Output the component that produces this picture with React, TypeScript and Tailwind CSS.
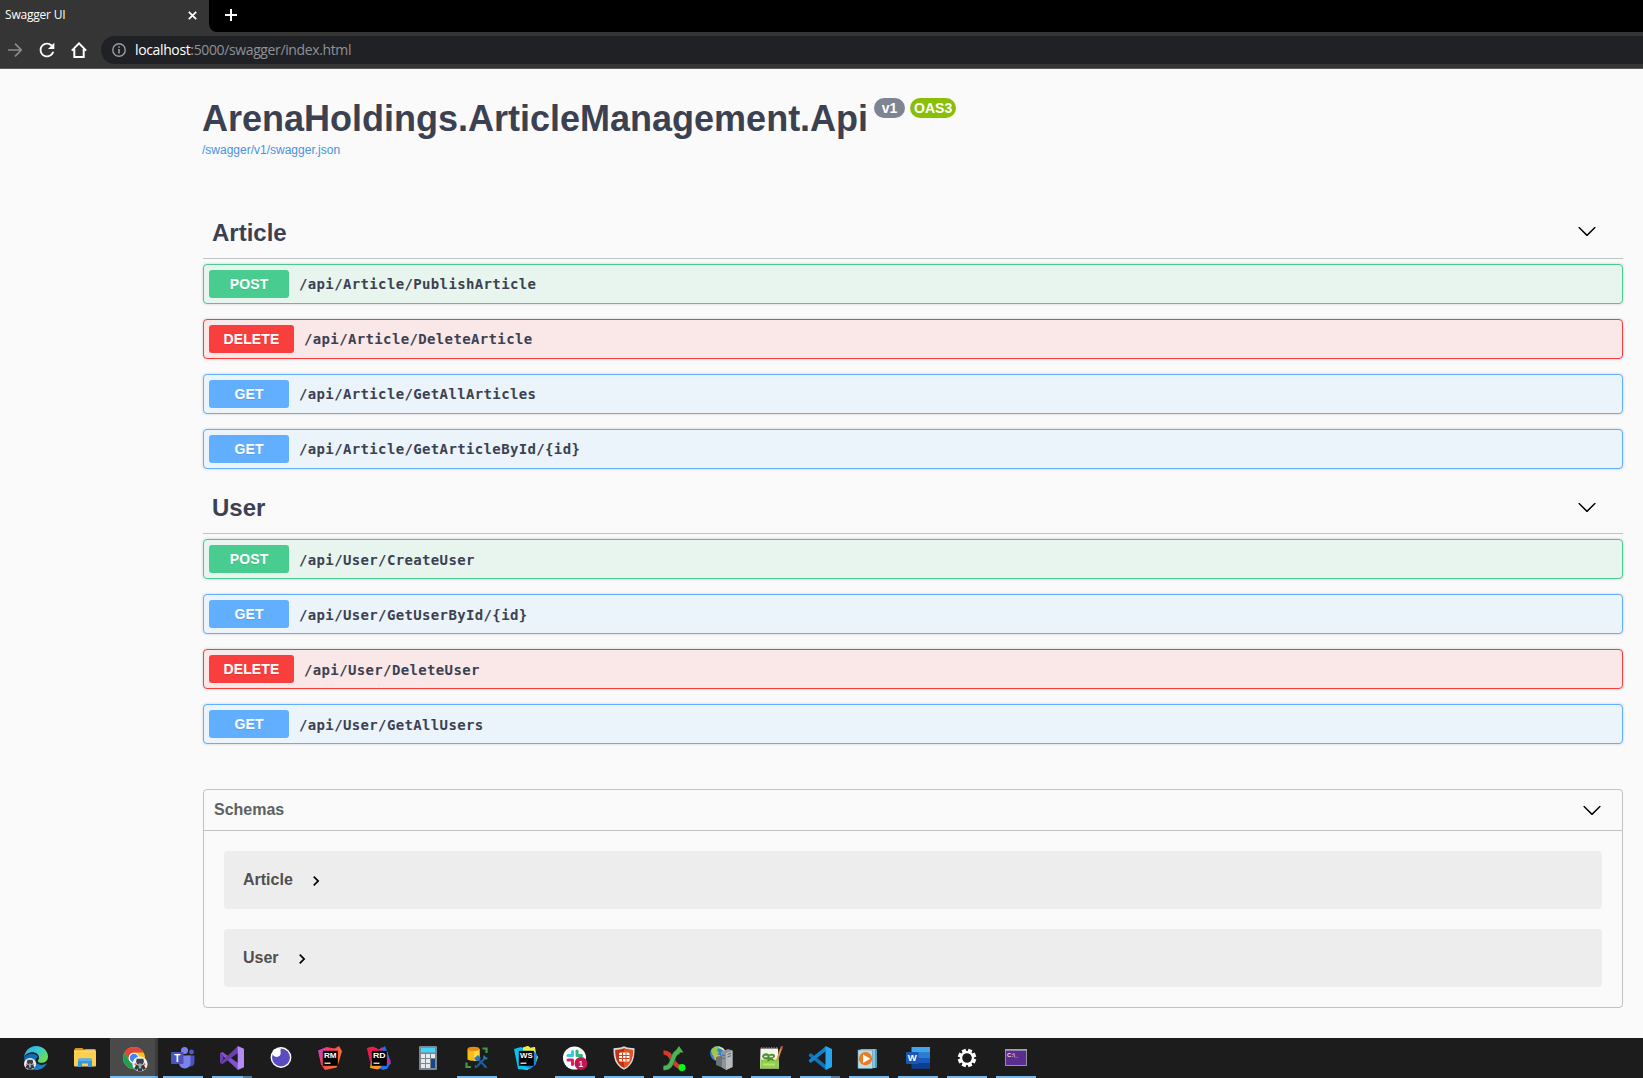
import React from "react";

type Method = "POST" | "DELETE" | "GET";

const methodStyles: Record<Method, { row: string; badge: string }> = {
  POST: { row: "border-[#49cc90] bg-[#e8f5ee]", badge: "w-[80px] bg-[#49cc90]" },
  DELETE: { row: "border-[#f93e3e] bg-[#fae7e7]", badge: "w-[85px] bg-[#f93e3e]" },
  GET: { row: "border-[#61affe] bg-[#ebf3fb]", badge: "w-[80px] bg-[#61affe]" },
};

const articleOps: [Method, string][] = [
  ["POST", "/api/Article/PublishArticle"],
  ["DELETE", "/api/Article/DeleteArticle"],
  ["GET", "/api/Article/GetAllArticles"],
  ["GET", "/api/Article/GetArticleById/{id}"],
];

const userOps: [Method, string][] = [
  ["POST", "/api/User/CreateUser"],
  ["GET", "/api/User/GetUserById/{id}"],
  ["DELETE", "/api/User/DeleteUser"],
  ["GET", "/api/User/GetAllUsers"],
];

function ChevronDown() {
  return (
    <svg width="20" height="20" viewBox="0 0 20 20" className="shrink-0 fill-black">
      <path d="M17.418 6.109c.272-.268.709-.268.979 0s.271.701 0 .969l-7.908 7.83c-.27.268-.707.268-.979 0l-7.908-7.83c-.27-.268-.27-.701 0-.969.271-.268.709-.268.979 0L10 13.25l7.418-7.141z" />
    </svg>
  );
}

function Operation({ method, path, pathClass }: { method: Method; path: string; pathClass: string }) {
  const s = methodStyles[method];
  return (
    <div className={`flex h-10 items-center rounded border px-[5px] shadow-[0_0_3px_rgba(0,0,0,0.19)] ${s.row}`}>
      <div
        className={`flex h-7 shrink-0 items-center justify-center rounded-[3px] text-sm leading-4 font-bold tracking-[0.15px] text-white [text-shadow:0_1px_0_rgba(0,0,0,0.1)] ${s.badge}`}
      >
        {method}
      </div>
      <div className={`px-[10px] font-['DejaVu_Sans_Mono','Liberation_Mono',monospace] text-[14px] leading-5 font-bold tracking-[0.36px] text-[#3b4151] ${pathClass}`}>
        {path}
      </div>
    </div>
  );
}

function Tag({
  name,
  ops,
  pathClass,
  chevronClass,
}: {
  name: string;
  ops: [Method, string][];
  pathClass: string;
  chevronClass: string;
}) {
  return (
    <section>
      <div className="mb-[5px] flex h-[50px] items-center justify-between border-b border-[#3b4151]/30 pr-[26px] pl-[9px]">
        <h2 className="pb-[2px] text-2xl leading-7 font-bold text-[#3b4151]">{name}</h2>
        <div className={chevronClass}>
          <ChevronDown />
        </div>
      </div>
      <div className="flex flex-col gap-[15px]">
        {ops.map(([m, p]) => (
          <Operation key={p} method={m} path={p} pathClass={pathClass} />
        ))}
      </div>
    </section>
  );
}

function Model({ name }: { name: string }) {
  return (
    <div className="flex h-[58px] items-center rounded bg-[#ededed] pl-[19px]">
      <span className="text-base leading-5 font-bold text-[#505050]">{name}</span>
      <svg width="20" height="20" viewBox="0 0 24 24" className="mt-[2px] ml-[13px]">
        <path d="M10 6L8.59 7.41 13.17 12l-4.58 4.59L10 18l6-6z" />
      </svg>
    </div>
  );
}

/* ---------- Taskbar icons, 24 x 24 ---------- */

function ProfileBadge({ cx, cy, r }: { cx: number; cy: number; r: number }) {
  return (
    <g transform={`translate(${cx} ${cy}) scale(${r / 6})`}>
      <circle r="6" fill="#eef0f1" />
      <path d="M-2.6-4.2h5.2l.5 2.4-1 2.2h-4.200l-1-2.200z" fill="#39434b" />
      <path d="M-4.600 3.600l1.700-3 2.900 1 2.900-1 1.700 3-1.800 1.400-.8-1.600-.3 2.300h-3.400l-.3-2.300-.8 1.600z" fill="#2c3940" />
      <path d="M-1-.4h2v4h-2z" fill="#9aa5aa" />
      <circle cx="-3.500" cy=".3" r=".8" fill="#e2574b" />
      <circle cx="3.500" cy=".3" r=".8" fill="#e2574b" />
    </g>
  );
}

const EdgeIcon = () => (
  <>
    <defs>
      <linearGradient id="edgeTop" x1="0" y1="0" x2="1" y2="0.6">
        <stop offset="0" stopColor="#2fa8e8" />
        <stop offset="0.5" stopColor="#35c6d8" />
        <stop offset="1" stopColor="#6ade56" />
      </linearGradient>
      <linearGradient id="edgeLow" x1="0" y1="0" x2="1" y2="1">
        <stop offset="0" stopColor="#0d5fae" />
        <stop offset="1" stopColor="#1b8ad8" />
      </linearGradient>
    </defs>
    <path d="M0 11.500C3 7 12 6 14 11c-3 1-3.500 6 1 7.500 3 1 6 0 8-1.500C20.500 22 16 24 12 24 5 24 0 18.500 0 11.500z" fill="url(#edgeLow)" />
    <path d="M0 11.500C.8 5 5.500 0 12 0c7.500 0 12 5.300 12 10.500 0 4.300-3.200 6.300-6.300 6.300-2.800 0-4-1-4-1.800 0-.6 1.300-1.200 1.300-3.300C15 8.500 12 6.300 8.500 6.300 4.500 6.300 1.200 8.500 0 11.500z" fill="url(#edgeTop)" />
    <ProfileBadge cx={6} cy={18} r={6} />
  </>
);

const ExplorerIcon = () => (
  <>
    <path d="M1 4.500Q1 3 2.500 2h7l2 2.500H22.500v4H1z" fill="#d9960f" />
    <rect x="1" y="4.500" width="22" height="16" rx="1" fill="#fccf4f" />
    <path d="M1 4.500h9l2-1.400h10.500v3H1z" fill="#ffe08a" opacity=".7" />
    <path d="M5 21v-7q0-1.500 1.500-1.500h11Q19 12.500 19 14v7h-4v-3.500H9V21z" fill="#3a97df" />
    <path d="M5 15h14v-1q0-1.500-1.500-1.500h-11Q5 12.500 5 14z" fill="#55b2f1" />
  </>
);

const ChromeIcon = () => (
  <>
    <circle cx="12" cy="12" r="11" fill="#fbc116" />
    <path d="M2.500 6.500A11 11 0 0 1 21.600 6.600H12A5.500 5.500 0 0 0 7.200 14.700z" fill="#e0473a" />
    <path d="M2.500 6.500l4.700 8.200A5.500 5.500 0 0 0 14 17.200L11.500 23A11 11 0 0 1 2.500 6.500z" fill="#1f9e55" />
    <circle cx="12" cy="12" r="5.300" fill="#fff" />
    <circle cx="12" cy="12" r="4.200" fill="#4286f4" />
    <ProfileBadge cx={18} cy={18} r={7.600} />
  </>
);

const TeamsIcon = () => (
  <>
    <circle cx="20.500" cy="6" r="2.400" fill="#5059c9" />
    <path d="M16 9.500h7.500v6.500c0 3-2 4.500-4.500 4.500h-3z" fill="#4a52bd" />
    <circle cx="13.500" cy="4.500" r="3.500" fill="#7b83eb" />
    <path d="M8 9.500h11.500v7.500c0 3-2.400 5.400-5.700 5.400S8 20 8 17z" fill="#7b83eb" />
    <rect x="0" y="6" width="12.500" height="12" rx="1" fill="#4b53bc" />
    <text x="6.300" y="15.600" textAnchor="middle" fontSize="10" fontWeight="700" fill="#fff">T</text>
  </>
);

const VisualStudioIcon = () => (
  <>
    <path d="M0 7.200l2.500-1.200 15.500 11V24z" fill="#8152c9" />
    <path d="M0 16.900l2.500 1.100L18 7V0z" fill="#6a3fae" />
    <path d="M0 7.200v9.700l3.300-3.100v-3.700z" fill="#6c40b3" />
    <path d="M17.700 0L24 2.700v18.500L17.700 24z" fill="#b58af2" />
  </>
);

const InsomniaIcon = () => (
  <>
    <circle cx="12" cy="11.500" r="10.400" fill="#fff" />
    <circle cx="12" cy="11.500" r="9" fill="#5a4cc0" />
    <path d="M3 8A9.300 9.300 0 0 1 11.800 2.500 6 6 0 0 1 3 8z" fill="#fff" />
    <circle cx="7.600" cy="6.800" r="4.100" fill="#fff" />
  </>
);

function JetBrains({ id, label, shape, stops }: { id: string; label: string; shape: string; stops: string[] }) {
  return (
    <>
      <defs>
        <linearGradient id={id} x1="0" y1="0.2" x2="1" y2="0.8">
          {stops.map((c, i) => (
            <stop key={i} offset={i / (stops.length - 1)} stopColor={c} />
          ))}
        </linearGradient>
      </defs>
      <path d={shape} fill={`url(#${id})`} />
      <rect x="4.800" y="4.800" width="15" height="15" fill="#000" />
      <text x="6" y="11.600" fontSize="8" fontWeight="700" fill="#fff" textLength="12.600" lengthAdjust="spacingAndGlyphs">
        {label}
      </text>
      <rect x="6.500" y="16.600" width="6" height="1.200" fill="#fff" />
    </>
  );
}

const RubyMineIcon = () => (
  <JetBrains id="rmGrad" label="RM" stops={["#c043d8", "#fd3a5b", "#f9603a", "#fd8a2b"]} shape="M0 4.500L8.500 1l8 1.500L21 0l3 5-3.500 12-2 4.500L7 24 3 18.500z" />
);
const RiderIcon = () => (
  <>
    <path d="M13 4l5-4 3 8 3 8-7 8-7-2z" fill="#1e72f0" />
    <path d="M0 2l5.500-1L12 3.500 15 1l5 8 4 9-4 1-8 4-7-1z" fill="#e32173" />
    <path d="M0 2l6-1.500L15 5l3 3H4l-1 8z" fill="#e91b50" />
    <path d="M4 15l-1 7 8 1.500 7-6z" fill="#fd9a20" />
    <path d="M13 23l2-5h8l-3 5z" fill="#1e72f0" />
    <path d="M14 4.500L16.500 1l4.500 5.500v4z" fill="#1e72f0" />
    <JetBrains id="rdGrad" label="RD" stops={["#e91b50", "#e91b50"]} shape="M5 5h10v10H5z" />
  </>
);
const WebStormIcon = () => (
  <>
    <path d="M8 2l6-2 3 2 4-1 1 7 2 3-3 8-8 5-7-2z" fill="#e9ef4a" />
    <path d="M0 3l7-2 5 3 6-1.500L22 8l-3 12-7 4-8-1z" fill="#07c3f2" />
    <path d="M13 3l5 0 5 6-1 9-6 5-5-3z" fill="#1d83e3" />
    <path d="M9 1.500L14 0l2 2 4.500-1 .5 4H9z" fill="#e9ef4a" />
    <JetBrains id="wsGrad" label="WS" stops={["#07c3f2", "#087cfa"]} shape="M5 5h10v10H5z" />
  </>
);

const CalculatorIcon = () => (
  <>
    <rect x="3" y="0" width="18" height="24" rx="1" fill="#7d8791" />
    <rect x="5" y="1.800" width="14" height="4.600" fill="#3fd6fb" />
    {[8, 13, 18].map((y) =>
      [5, 10, 15].map((x) => <rect key={`${x}-${y}`} x={x} y={y} width="4" height="4" fill="#e6eaed" />),
    )}
    <rect x="15" y="13" width="4" height="9" fill="#17458b" />
  </>
);

const DatabaseToolIcon = () => (
  <>
    <path d="M2.500 3v10c0 2.400 12 2.400 12 0V3z" fill="#f7bd17" />
    <path d="M9 4v11c3 0 5.500-.8 5.500-2V3z" fill="#ffd83d" />
    <ellipse cx="8.500" cy="2.900" rx="6" ry="2.200" fill="#e88a18" />
    <path d="M17.500 2.500h4V7M1.500 16.500V21H6" fill="none" stroke="#3f9a45" strokeWidth="2.200" />
    <path d="M12 12l8.500 8.500M20.500 11.500L12 20.500" stroke="#1d5c9a" strokeWidth="2.200" />
    <path d="M10 12.500l3-2.500 2 2-3 2.500zM19 9.500v3h3.500M19 20.500l3 1M10 19.500l1.500 2.500" stroke="#2f78b5" strokeWidth="1.300" fill="#2f78b5" />
  </>
);

const SlackIcon = () => (
  <>
    <circle cx="11.500" cy="12" r="11.500" fill="#fff" />
    <g strokeWidth="3" strokeLinecap="round">
      <path d="M9.500 5.500v4M5 9.500h4.500" stroke="#36c5f0" />
      <path d="M14 5v4.500M14 9.500h4.500" stroke="#2eb67d" />
      <path d="M5 14h4.500M9.500 14v4.500" stroke="#e01e5a" />
      <path d="M14 14h4" stroke="#ecb22e" />
    </g>
    <circle cx="18" cy="17.500" r="6.500" fill="#c4164f" />
    <text x="18" y="20.800" textAnchor="middle" fontSize="9.500" fill="#fff">1</text>
  </>
);

const ShieldIcon = () => (
  <>
    <path d="M12 .3C8.500 2 5 2.200 1.500 2.200 1.300 12 3 19 12 23.700 21 19 22.700 12 22.500 2.200 19 2.200 15.500 2 12 .3z" fill="#d9d9d9" />
    <path d="M12 2.300C9 3.600 6 3.900 3.200 3.900 3.200 12.300 4.800 18 12 22c7.200-4 8.800-9.700 8.800-18.100C18 3.900 15 3.600 12 2.300z" fill="#c62f12" />
    <path d="M12 2.300V22c7.200-4 8.800-9.700 8.800-18.100C18 3.900 15 3.600 12 2.300z" fill="#e4531d" />
    <rect x="7" y="6.500" width="10.500" height="9" rx="1.500" fill="#fff" />
    <path d="M7 9.500h10.500M7 12.500h10.500M10.500 6.500v9M14 6.500v9" stroke="#d8401c" strokeWidth="1" />
  </>
);

const CrossArrowsIcon = () => (
  <>
    <path d="M2.500 6.500c5.500 0 7 4 9 7.500s3.500 6 7 6.500" fill="none" stroke="#d8382d" strokeWidth="4.500" />
    <path d="M2.500 22c9 0 8-8 11-13 1-1.800 2.500-3 5-3.500" fill="none" stroke="#1f7a34" strokeWidth="5.200" />
    <path d="M2.500 22c9 0 8-8 11-13 1-1.800 2.500-3 4.500-3.500" fill="none" stroke="#4eb257" strokeWidth="4" />
    <path d="M18 0l4.500 6.500h-9z" fill="#4eb257" />
    <circle cx="21" cy="21.500" r="3.600" fill="#00ff1e" />
  </>
);

const ServerGlobeIcon = () => (
  <>
    <circle cx="7.500" cy="7.500" r="7.400" fill="#2a86dc" />
    <path d="M1 4c3-4 6-4 9-3.500L7 4l2 3-4 4-3-3z" fill="#9bc646" />
    <path d="M3 8l7 1-2 5H5z" fill="#d9b93d" />
    <path d="M9 1.500c4 .5 6 3 6 7" fill="none" stroke="#f6e087" strokeWidth="1.500" />
    <path d="M11 6l7-3 4.500 1.500V21L16 24l-5-3z" fill="#8e9498" />
    <path d="M16 7l6.500-2.500V21L16 24z" fill="#b4babd" />
    <path d="M6 11l6-1.500V20l-1 1-5-2z" fill="#6a7379" />
    <path d="M17.500 8.500l3.500-1.300M17.500 11l3.500-1.300M12 9l3 .800M12 12l3 .800" stroke="#616a70" />
  </>
);

const NotepadIcon = () => (
  <>
    <path d="M1.500 2.500h17.500l1 20H1z" fill="#f4f5ee" />
    <path d="M2 2h16.500" stroke="#8b8b8b" strokeWidth="1.600" strokeDasharray="1.300 1.200" />
    <path d="M1.800 13.500h17.700l.5 9H1.200z" fill="#8fce48" />
    <path d="M3 10c2-3.500 5-3 7-1.500 3-1.500 6-.5 6 1.500 0 1.500-1.500 2.200-2.500 2.200l2 2.800-4-1-3 1.800v-2.300C5 13.500 3 12 3 10z" fill="#4c8f2c" />
    <path d="M5 10.500h3.500M10.500 10.500h3.500" stroke="#d8eec0" strokeWidth="1.600" />
    <path d="M4 18.500h12" stroke="#b9e27f" strokeWidth="2" />
    <path d="M22.500 1.500L18 14.500" stroke="#dd9635" strokeWidth="2" />
    <path d="M23.200.2l-1 2.600" stroke="#b7474d" strokeWidth="2.200" />
  </>
);

const VsCodeIcon = () => (
  <>
    <path d="M.8 8.800L2.700 7l15.500 12.300V24L.8 9.900z" fill="#0f74ba" />
    <path d="M.8 15.200L2.700 17 18.200 4.700V0L.8 14.100z" fill="#1184cd" />
    <path d="M17.500 0L24 3v18l-6.500 3z" fill="#27a5ee" />
  </>
);

const MediaPlayerIcon = () => (
  <>
    <rect x="5" y="3" width="15" height="19" rx="1" fill="#4d9bb8" />
    <rect x="3.500" y="3" width="14.500" height="19" fill="#8ac4da" />
    <rect x="1" y="4" width="14.500" height="18.500" fill="#b8dcea" stroke="#5f97af" strokeWidth=".6" />
    <circle cx="8.500" cy="12.700" r="6.600" fill="#ee7a1c" />
    <path d="M6 8.500l7.300 4.200L6 17z" fill="#fff" />
  </>
);

const WordIcon = () => (
  <>
    <rect x="5.500" y="1" width="18.500" height="5.800" fill="#41a5ee" />
    <rect x="5.500" y="6.600" width="18.500" height="5.600" fill="#2b7cd3" />
    <rect x="5.500" y="12" width="18.500" height="5.500" fill="#185abd" />
    <rect x="5.500" y="17.300" width="18.500" height="5.500" fill="#103f91" />
    <rect x="0" y="6" width="12.500" height="12" rx="1" fill="#1a56b6" />
    <text x="6.200" y="15.300" textAnchor="middle" fontSize="9.500" fontWeight="700" fill="#fff">W</text>
  </>
);

const SettingsIcon = () => (
  <g fill="#fff">
    {[22.5, 67.5, 112.5, 157.5, 202.5, 247.5, 292.5, 337.5].map((a) => (
      <rect key={a} x="9.900" y="2.800" width="4.200" height="4" transform={`rotate(${a} 12 12)`} />
    ))}
    <circle cx="12" cy="12" r="5.900" fill="none" stroke="#fff" strokeWidth="2.200" />
  </g>
);

const TerminalIcon = () => (
  <>
    <rect x="1.500" y="3.500" width="21" height="16" fill="#5b2d91" stroke="#8d949c" />
    <path d="M1 4h22" stroke="#a8adb3" strokeWidth="1.400" />
    <text x="3" y="10.500" fontSize="5.500" fontWeight="700" fill="#e4daf0" textLength="11" lengthAdjust="spacingAndGlyphs">C:\_</text>
  </>
);

type Task = { name: string; icon: React.ReactNode; state?: "running" | "stacked" | "active" };

const tasks: Task[] = [
  { name: "Edge", icon: <EdgeIcon /> },
  { name: "Explorer", icon: <ExplorerIcon /> },
  { name: "Chrome", icon: <ChromeIcon />, state: "active" },
  { name: "Teams", icon: <TeamsIcon />, state: "running" },
  { name: "Visual Studio", icon: <VisualStudioIcon />, state: "stacked" },
  { name: "Insomnia", icon: <InsomniaIcon /> },
  { name: "RubyMine", icon: <RubyMineIcon /> },
  { name: "Rider", icon: <RiderIcon /> },
  { name: "Calculator", icon: <CalculatorIcon /> },
  { name: "Database", icon: <DatabaseToolIcon />, state: "running" },
  { name: "WebStorm", icon: <WebStormIcon /> },
  { name: "Slack", icon: <SlackIcon />, state: "running" },
  { name: "Shield", icon: <ShieldIcon />, state: "running" },
  { name: "Cross", icon: <CrossArrowsIcon />, state: "running" },
  { name: "Server", icon: <ServerGlobeIcon />, state: "running" },
  { name: "Notepad", icon: <NotepadIcon />, state: "running" },
  { name: "Code", icon: <VsCodeIcon />, state: "stacked" },
  { name: "Media", icon: <MediaPlayerIcon />, state: "running" },
  { name: "Word", icon: <WordIcon />, state: "running" },
  { name: "Settings", icon: <SettingsIcon />, state: "running" },
  { name: "Terminal", icon: <TerminalIcon />, state: "running" },
];

function Taskbar() {
  return (
    <footer className="flex h-10 shrink-0 gap-px bg-[#1c1c1c] pl-3">
      {tasks.map((t) => (
        <div
          key={t.name}
          className={`flex w-12 flex-col items-center ${t.state === "active" ? "bg-[#4a4a4a] shadow-[inset_-3px_0_0_#3c3c3c]" : ""}`}
        >
          <div className="flex h-[38px] w-12 items-center justify-center pt-[2px]">
            <svg width="24" height="24" viewBox="0 0 24 24" className="overflow-visible font-['Liberation_Sans',sans-serif]">
              {t.icon}
            </svg>
          </div>
          {t.state === "active" && <div className="h-[2px] w-12 border-r-[3px] border-[#69a5d3] bg-[#76b9ed]" />}
          {t.state === "running" && <div className="h-[2px] w-10 bg-[#76b9ed]" />}
          {t.state === "stacked" && <div className="h-[2px] w-10 border-r-[9px] border-[#527da0] bg-[#76b9ed]" />}
        </div>
      ))}
    </footer>
  );
}

function BrowserBar() {
  return (
    <header className="h-[69px] shrink-0 border-b border-[#5b5b5b] bg-[#353535] font-['Open_Sans',sans-serif]">
      <div className="flex h-8">
        <div className="flex w-[209px] items-center pl-[5px]">
          <span className="flex-1 pb-[2px] text-xs leading-4 tracking-[-0.2px] text-white">Swagger UI</span>
          <svg width="9" height="9" viewBox="0 0 9 9" className="mr-[12px] mb-[2px]">
            <path d="M.8.8l7.400 7.400M8.200.8L.8 8.200" stroke="#fff" strokeWidth="1.700" />
          </svg>
        </div>
        <div className="flex flex-1 items-center rounded-bl-lg bg-black pl-4">
          <svg width="12" height="12" viewBox="0 0 12 12" className="mb-[2px]">
            <path d="M6 0v12M0 6h12" stroke="#fff" strokeWidth="2" />
          </svg>
        </div>
      </div>
      <div className="flex h-9 items-center">
        <svg width="14" height="14" viewBox="0 0 14 14" className="ml-2" fill="none" stroke="#8b8b8b" strokeWidth="1.700">
          <path d="M0 7h13M7 .7L13.200 7 7 13.300" />
        </svg>
        <svg width="22" height="22" viewBox="0 0 24 24" className="ml-[14px]" fill="#fff">
          <path d="M17.650 6.350A7.958 7.958 0 0 0 12 4c-4.420 0-7.990 3.580-7.990 8s3.570 8 7.990 8c3.730 0 6.840-2.550 7.730-6h-2.080A5.990 5.990 0 0 1 12 18c-3.310 0-6-2.690-6-6s2.690-6 6-6c1.660 0 3.140.690 4.220 1.780L13 11h7V4l-2.350 2.350z" />
        </svg>
        <svg width="16" height="16" viewBox="0 0 16 16" className="ml-[13px]" fill="none" stroke="#fff" strokeWidth="2">
          <path d="M.8 8.600L8 1.400l7.200 7.200M3.300 7v8h9.400V7" />
        </svg>
        <div className="ml-[14px] flex h-7 flex-1 items-center rounded-l-full bg-[#202124] pl-[11px]">
          <svg width="14" height="14" viewBox="0 0 14 14" fill="none" stroke="#9a9da1" strokeWidth="1.400">
            <circle cx="7" cy="7" r="6.200" />
            <path d="M7 6v4.500M7 3.300v1.500" strokeWidth="1.600" />
          </svg>
          <span className="ml-[9px] text-sm leading-5 tracking-[-0.37px] text-[#8f9296]">
            <span className="text-white">localhost</span>:5000/swagger/index.html
          </span>
        </div>
      </div>
    </header>
  );
}

export default function App() {
  return (
    <div className="flex h-[1078px] w-[1643px] flex-col overflow-hidden bg-[#fafafa] font-['Liberation_Sans',sans-serif]">
      <BrowserBar />
      <main className="flex-1 pr-5 pl-[203px]">
        <div className="-ml-px h-[140px] pt-[29px]">
          <div className="flex items-start">
            <h1 className="pt-[1px] text-4xl leading-10 font-bold text-[#3b4151]">ArenaHoldings.ArticleManagement.Api</h1>
            <span className="ml-[6px] flex h-5 w-[31px] items-center justify-center rounded-full bg-[#7d8492] text-sm leading-4 font-bold text-white">
              v1
            </span>
            <span className="ml-[5px] flex h-5 w-[46px] items-center justify-center rounded-full bg-[#89bf04] text-sm leading-4 font-bold text-white">
              OAS3
            </span>
          </div>
          <a className="block pt-[3px] text-xs leading-4 text-[#4990e2]">/swagger/v1/swagger.json</a>
        </div>
        <div className="flex flex-col gap-[15px]">
          <Tag name="Article" ops={articleOps} pathClass="" chevronClass="pb-[5px]" />
          <Tag name="User" ops={userOps} pathClass="pt-[2px]" chevronClass="pb-[3px]" />
        </div>
        <section className="mt-[45px] rounded border border-[#3b4151]/30">
          <div className="flex h-[41px] items-center justify-between border-b border-[#3b4151]/30 pr-5 pl-[10px]">
            <h3 className="pb-[1px] text-base leading-5 font-bold text-[#606060]">Schemas</h3>
            <ChevronDown />
          </div>
          <div className="flex flex-col gap-5 p-5">
            <Model name="Article" />
            <Model name="User" />
          </div>
        </section>
      </main>
      <Taskbar />
    </div>
  );
}
